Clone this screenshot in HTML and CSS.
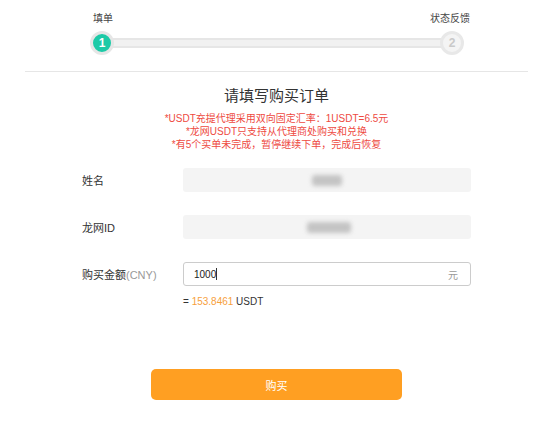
FILE: index.html
```html
<html>
  <head>
    <title>请填写购买订单</title>
    <link rel="stylesheet" href="styles.css">
  </head>
  <body>
    <div class="page">
      <div class="steps">
        <div class="step-labels">
          <span>填单</span>
          <span>状态反馈</span>
        </div>
        <div class="step-track">
          <span class="dot dot-on">1</span>
          <span class="bar"></span>
          <span class="dot dot-off">2</span>
        </div>
      </div>

      <div class="divider"></div>

      <h2 class="title">请填写购买订单</h2>
      <div class="notes">
        <p>*USDT充提代理采用双向固定汇率：1USDT=6.5元</p>
        <p>*龙网USDT只支持从代理商处购买和兑换</p>
        <p>*有5个买单未完成，暂停继续下单，完成后恢复</p>
      </div>

      <div class="form">
        <div class="row">
          <label>姓名</label>
          <div class="field readonly"><span class="blur blur-name"></span></div>
        </div>
        <div class="row">
          <label>龙网ID</label>
          <div class="field readonly"><span class="blur blur-id"></span></div>
        </div>
        <div class="row">
          <label>购买金额<span class="unit">(CNY)</span></label>
          <div class="field input">
            <span class="value">1000<i class="caret"></i></span>
            <span class="suffix">元</span>
          </div>
        </div>
        <div class="row row-result">
          <span></span>
          <div class="result">= <span class="amount">153.8461</span> USDT</div>
        </div>
      </div>

      <div class="actions">
        <button class="buy">购买</button>
      </div>
    </div>
  </body>
</html>
```

FILE: styles.css
```css
body { margin: 0; background: #fff; font-family: "Liberation Sans", "Noto Sans CJK SC", sans-serif; color: #333; }
.page { margin: 0 25px; }

/* steps */
.steps { margin-left: 65px; width: 380px; padding-top: 12px; }
.step-labels { display: flex; justify-content: space-between; font-size: 10px; line-height: 14px; color: #444; padding-left: 3px; }
.step-track { display: flex; align-items: center; margin-top: 5px; width: 374px; }
.dot { position: relative; z-index: 1; box-sizing: border-box; width: 24px; height: 24px; border-radius: 50%; border: 3px solid #e6e6e6; display: flex; align-items: center; justify-content: center; font-size: 12px; font-weight: bold; line-height: 1; }
.dot-on { background: #1ccaa7; color: #fff; }
.dot-off { background: #f4f4f4; color: #c9c9c9; border-color: #e8e8e8; }
.bar { flex: 1; height: 6px; margin: 0 -4px; background: #f1f1f1; border-top: 2px solid #e6e6e6; border-bottom: 2px solid #e6e6e6; }

.divider { height: 1px; background: #e6e6e6; margin-top: 16px; }

/* heading */
.title { margin: 14px 0 0; font-size: 15px; line-height: 20px; font-weight: normal; text-align: center; color: #333; }
.notes { margin-top: 6px; text-align: center; color: #ee4a3f; font-size: 10px; line-height: 13px; }
.notes p { margin: 0; }

/* form */
.form { width: 389px; margin: 17px auto 0; }
.row { display: grid; grid-template-columns: 101px 288px; align-items: center; margin-bottom: 23px; }
.row label { font-size: 11px; color: #333; }
.row label .unit { color: #999; }
.field { box-sizing: border-box; height: 24px; border-radius: 3px; display: flex; align-items: center; font-size: 10px; }
.readonly { background: #f4f4f4; justify-content: center; }
.blur { display: inline-block; height: 11px; background: #c4c4c4; filter: blur(2px); border-radius: 3px; }
.blur-name { width: 30px; }
.blur-id { width: 44px; margin-left: 4px; }
.input { border: 1px solid #ccc; justify-content: space-between; padding: 0 12px 0 10px; }
.input .value { color: #222; }
.caret { display: inline-block; width: 1px; height: 12px; background: #333; vertical-align: -2px; }
.input .suffix { color: #999; }
.row-result { margin-top: -14px; }
.result { font-size: 10px; line-height: 14px; color: #333; }
.result .amount { color: #f7a03c; }

/* button */
.actions { display: flex; justify-content: center; margin-top: 60px; }
.buy { width: 251px; height: 31px; border: none; border-radius: 5px; background: #ff9f22; color: #fff; font-family: inherit; font-size: 11px; }
```
